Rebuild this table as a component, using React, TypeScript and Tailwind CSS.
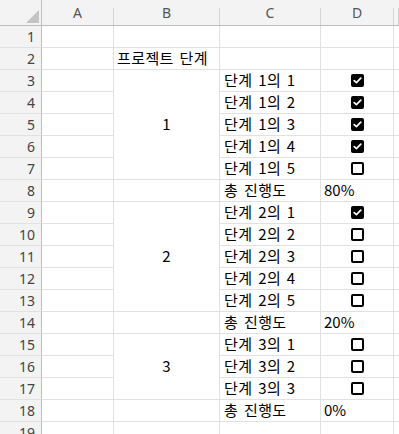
import React from "react";

type Row = {
  n: number;
  label?: string; // text in column B for a single cell
  group?: string; // merged block in column B starts here
  span?: string; // row-span class for the merged block
  inGroup?: boolean; // row covered by a merged block above
  task?: string;
  done?: boolean;
  total?: string;
};

const rows: Row[] = [
  { n: 1 },
  { n: 2, label: "프로젝트 단계" },
  { n: 3, group: "1", span: "row-span-5", task: "단계 1의 1", done: true },
  { n: 4, inGroup: true, task: "단계 1의 2", done: true },
  { n: 5, inGroup: true, task: "단계 1의 3", done: true },
  { n: 6, inGroup: true, task: "단계 1의 4", done: true },
  { n: 7, inGroup: true, task: "단계 1의 5", done: false },
  { n: 8, task: "총 진행도", total: "80%" },
  { n: 9, group: "2", span: "row-span-5", task: "단계 2의 1", done: true },
  { n: 10, inGroup: true, task: "단계 2의 2", done: false },
  { n: 11, inGroup: true, task: "단계 2의 3", done: false },
  { n: 12, inGroup: true, task: "단계 2의 4", done: false },
  { n: 13, inGroup: true, task: "단계 2의 5", done: false },
  { n: 14, task: "총 진행도", total: "20%" },
  { n: 15, group: "3", span: "row-span-3", task: "단계 3의 1", done: false },
  { n: 16, inGroup: true, task: "단계 3의 2", done: false },
  { n: 17, inGroup: true, task: "단계 3의 3", done: false },
  { n: 18, task: "총 진행도", total: "0%" },
  { n: 19 },
];

const cols = ["A", "B", "C", "D", ""];

const cell = "border-r border-b border-[#e1e1e1] flex items-center min-w-0 overflow-hidden";
const text = "text-[15px] text-black whitespace-nowrap font-['Noto_Sans_CJK_KR',sans-serif]";
const hangul = "tracking-[0.4px] [word-spacing:2px]";

function Checkbox({ checked }: { checked: boolean }) {
  if (!checked) {
    return <div className="w-[13px] h-[13px] rounded-[2px] border-2 border-black bg-white" />;
  }
  return (
    <div className="w-[13px] h-[13px] rounded-[2px] bg-black flex items-center justify-center">
      <svg width="9" height="9" viewBox="0 0 9 9">
        <path d="M1.2 4.6 L3.4 6.6 L7.8 2.2" fill="none" stroke="white" strokeWidth="1.7" strokeLinecap="round" strokeLinejoin="round" />
      </svg>
    </div>
  );
}

function ColumnHeader({ name }: { name: string }) {
  return (
    <div className="flex bg-[#f3f3f3] border-b border-[#bdbdbd]">
      <div className="flex-1 flex items-center justify-center text-[14px] text-[#555]">{name}</div>
      <div className="w-px mt-2 bg-[#d4d4d4]" />
    </div>
  );
}

export default function App() {
  return (
    <div className="w-[399px] h-[434px] overflow-hidden bg-white font-['Noto_Sans',sans-serif]">
      <div className="grid grid-cols-[42px_72px_106px_101px_73px_1fr] grid-rows-[26px_repeat(19,22px)]">
        {/* corner */}
        <div className="bg-[#f3f3f3] border-r border-b border-[#bdbdbd] flex items-end justify-end pr-[2px] pb-[2px]">
          <svg width="13" height="13" viewBox="0 0 13 13">
            <path d="M13 0 L13 13 L0 13 Z" fill="#c4c4c4" />
          </svg>
        </div>
        {cols.map((c, i) => (
          <ColumnHeader key={i} name={c} />
        ))}

        {rows.map((r) => (
          <React.Fragment key={r.n}>
            <div className="bg-[#f3f3f3] border-r border-r-[#bdbdbd] border-b border-b-[#e1e1e1] flex items-center justify-end pr-[6px] text-[14px] text-[#444]">
              {r.n}
            </div>
            <div className={cell} />
            {r.group ? (
              <div className={`${cell} ${r.span} ${text} justify-center`}>{r.group}</div>
            ) : r.inGroup ? null : (
              <div className={`${cell} ${text} ${hangul} pl-[3px]`}>{r.label}</div>
            )}
            <div className={`${cell} ${text} ${hangul} pl-[4px]`}>{r.task}</div>
            <div className={`${cell} ${text} ${r.total ? "pl-[3px]" : "justify-center"}`}>
              {r.total ?? (r.done !== undefined && <Checkbox checked={r.done} />)}
            </div>
            <div className="border-b border-[#e1e1e1]" />
          </React.Fragment>
        ))}
      </div>
    </div>
  );
}
